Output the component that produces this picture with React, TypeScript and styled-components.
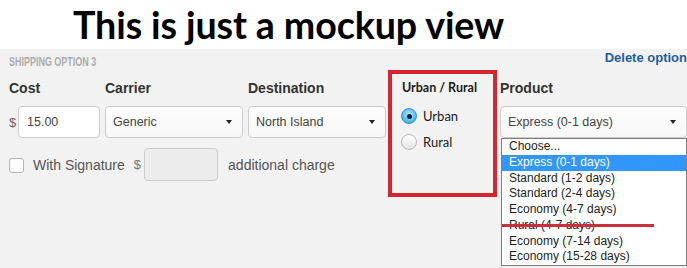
import React from "react";
import styled, { createGlobalStyle } from "styled-components";

const GlobalStyle = createGlobalStyle`
  html, body { margin: 0; padding: 0; height: 100%; background: #fff; overflow: hidden; }
  #root { height: 100%; }
  *, *::before, *::after { box-sizing: border-box; }
`;

const Page = styled.div`
  height: 100%;
  display: flex;
  flex-direction: column;
  font-family: "Liberation Sans", Arial, sans-serif;
`;

const Title = styled.h1`
  margin: 0;
  height: 49px;
  flex: none;
  padding-left: 73px;
  font-family: Lato, "Open Sans", sans-serif;
  font-weight: 700;
  font-size: 37.6px;
  letter-spacing: -0.1px;
  line-height: 49px;
  color: #000;
  white-space: nowrap;
`;

const Panel = styled.section`
  flex: 1;
  background: #f2f2f2;
  padding-left: 9px;
  display: flex;
  flex-direction: column;
`;

const PanelHeader = styled.div`
  height: 21px;
  display: flex;
  justify-content: space-between;
  align-items: flex-start;
`;

const SectionTitle = styled.span`
  display: inline-block;
  margin-top: 6px;
  font-family: "Liberation Sans", Arial, sans-serif;
  font-size: 13px;
  font-weight: 700;
  line-height: 14px;
  color: #acacac;
  white-space: nowrap;
  transform: scaleX(0.69);
  transform-origin: left center;
`;

const DeleteLink = styled.a`
  margin-top: 2px;
  font-size: 13px;
  line-height: 14px;
  font-weight: 700;
  color: #1f5f9e;
  text-decoration: none;
  white-space: nowrap;
  cursor: pointer;
`;

const FormArea = styled.div`
  display: flex;
  align-items: flex-start;
`;

const LeftBlock = styled.div`
  padding-top: 8px;
  display: flex;
  flex-direction: column;
`;

const FieldsRow = styled.div`
  display: flex;
  gap: 5px;
`;

const Field = styled.div<{ $w: number }>`
  display: flex;
  flex-direction: column;
  gap: 8px;
  width: ${(p) => p.$w}px;
`;

const Label = styled.label`
  font-size: 14px;
  line-height: 20px;
  font-weight: 700;
  color: #333;
`;

const InputRow = styled.div`
  display: flex;
  align-items: center;
  gap: 3px;
`;

const Currency = styled.span`
  font-size: 13px;
  color: #666;
  width: 6px;
`;

const TextInput = styled.div<{ $w: number; $disabled?: boolean; $h?: number }>`
  width: ${(p) => p.$w}px;
  height: ${(p) => p.$h ?? 32}px;
  border: 1px solid #ccc;
  border-radius: 4px;
  background: ${(p) => (p.$disabled ? "#ececec" : "#fff")};
  padding-left: 8px;
  display: flex;
  align-items: center;
  font-size: 12.5px;
  color: #444;
`;

const SelectWrap = styled.div`
  position: relative;
`;

const SelectBox = styled.div`
  height: 32px;
  border: 1px solid #ccc;
  border-radius: 4px;
  background: linear-gradient(#fdfdfd, #f7f7f7);
  padding: 0 10px 0 7px;
  display: flex;
  align-items: center;
  justify-content: space-between;
  font-size: 12.5px;
  color: #444;
  white-space: nowrap;
`;

const Caret = styled.span`
  width: 0;
  height: 0;
  border-left: 3px solid transparent;
  border-right: 3px solid transparent;
  border-top: 4px solid #222;
`;

const SignatureRow = styled.div`
  margin-top: 10px;
  height: 33px;
  display: flex;
  align-items: center;
  font-size: 14px;
  color: #555;
`;

const Checkbox = styled.span`
  width: 15px;
  height: 15px;
  margin-top: 2px;
  border: 1px solid #b4b4b4;
  border-radius: 3px;
  background: #fff;
  margin-right: 9px;
`;

const RowText = styled.span<{ $ml?: number }>`
  margin-left: ${(p) => p.$ml ?? 0}px;
  white-space: nowrap;
`;

const SmallDollar = styled.span`
  margin-left: 9px;
  margin-right: 3px;
  font-size: 13px;
  color: #777;
`;

const RedBox = styled.div`
  margin-left: 2px;
  width: 109px;
  height: 127px;
  border: 4px solid #d5262f;
  padding: 6px 0 0 9px;
  font-family: Lato, "Open Sans", sans-serif;
  color: #1a1a1a;
`;

const BoxTitle = styled.div`
  font-size: 12.5px;
  line-height: 15px;
  font-weight: 700;
  padding-left: 1px;
  white-space: nowrap;
`;

const RadioList = styled.div`
  margin-top: 11px;
  display: flex;
  flex-direction: column;
  gap: 6px;
`;

const RadioRow = styled.label`
  height: 20px;
  display: flex;
  align-items: center;
  gap: 6px;
  font-size: 13px;
`;

const Radio = styled.span<{ $checked?: boolean }>`
  width: 16px;
  height: 16px;
  border-radius: 50%;
  display: flex;
  align-items: center;
  justify-content: center;
  border: 1px solid ${(p) => (p.$checked ? "#3a8fc6" : "#b9b9b9")};
  background: ${(p) =>
    p.$checked
      ? "radial-gradient(circle at 50% 40%, #b6e6fb 0%, #5fc0ec 55%, #2b9ad4 100%)"
      : "linear-gradient(#ffffff, #e4e4e4)"};
  &::after {
    content: "";
    width: 5px;
    height: 5px;
    border-radius: 50%;
    background: ${(p) => (p.$checked ? "#16222e" : "transparent")};
  }
`;

const ProductField = styled(Field)`
  margin-left: 3px;
  padding-top: 8px;
`;

const DropList = styled.ul`
  position: absolute;
  top: 100%;
  left: 1px;
  right: 0;
  margin: 0;
  padding: 0;
  list-style: none;
  background: #fff;
  border: 1px solid #7d7d7d;
  font-family: "Liberation Sans", Arial, sans-serif;
  font-size: 12px;
  color: #222;
`;

const DropItem = styled.li<{ $active?: boolean }>`
  height: 15.75px;
  line-height: 15.75px;
  padding-left: 7px;
  background: ${(p) => (p.$active ? "#3297fd" : "transparent")};
  color: ${(p) => (p.$active ? "#fff" : "#222")};
  white-space: nowrap;
`;

const StrikeMark = styled.span`
  position: absolute;
  left: 0;
  top: 85px;
  width: 152px;
  height: 3px;
  background: #c7303c;
`;

const options = [
  "Choose...",
  "Express (0-1 days)",
  "Standard (1-2 days)",
  "Standard (2-4 days)",
  "Economy (4-7 days)",
  "Rural (4-7 days)",
  "Economy (7-14 days)",
  "Economy (15-28 days)",
];

export default function App() {
  return (
    <Page>
      <GlobalStyle />
      <Title>This is just a mockup view</Title>
      <Panel>
        <PanelHeader>
          <SectionTitle>SHIPPING OPTION 3</SectionTitle>
          <DeleteLink>Delete option</DeleteLink>
        </PanelHeader>
        <FormArea>
          <LeftBlock>
            <FieldsRow>
              <Field $w={91}>
                <Label>Cost</Label>
                <InputRow>
                  <Currency>$</Currency>
                  <TextInput $w={82}>15.00</TextInput>
                </InputRow>
              </Field>
              <Field $w={138}>
                <Label>Carrier</Label>
                <SelectBox>
                  Generic
                  <Caret />
                </SelectBox>
              </Field>
              <Field $w={138}>
                <Label>Destination</Label>
                <SelectBox>
                  North Island
                  <Caret />
                </SelectBox>
              </Field>
            </FieldsRow>
            <SignatureRow>
              <Checkbox />
              <RowText>With Signature</RowText>
              <SmallDollar>$</SmallDollar>
              <TextInput $w={74} $h={33} $disabled />
              <RowText $ml={10}>additional charge</RowText>
            </SignatureRow>
          </LeftBlock>
          <RedBox>
            <BoxTitle>Urban / Rural</BoxTitle>
            <RadioList>
              <RadioRow>
                <Radio $checked />
                Urban
              </RadioRow>
              <RadioRow>
                <Radio />
                Rural
              </RadioRow>
            </RadioList>
          </RedBox>
          <ProductField $w={187}>
            <Label>Product</Label>
            <SelectWrap>
              <SelectBox>
                Express (0-1 days)
                <Caret />
              </SelectBox>
              <DropList>
                {options.map((o, i) => (
                  <DropItem key={o} $active={i === 1}>
                    {o}
                  </DropItem>
                ))}
                <StrikeMark />
              </DropList>
            </SelectWrap>
          </ProductField>
        </FormArea>
      </Panel>
    </Page>
  );
}
